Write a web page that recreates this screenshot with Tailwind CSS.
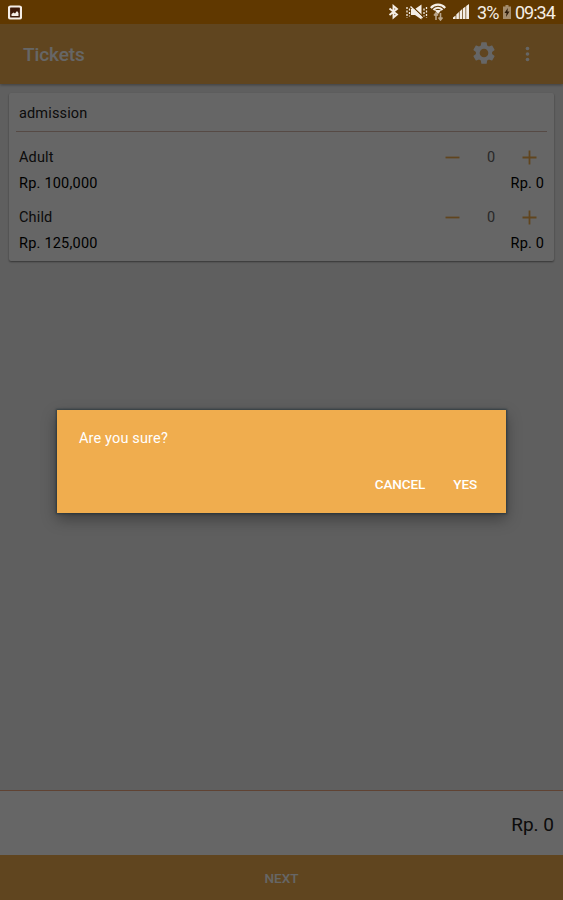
<!DOCTYPE html>
<html lang="en">

<head>
  <meta charset="UTF-8">
  <meta name="viewport" content="width=device-width, initial-scale=1.0">
  <title>Tickets</title>
  <script src="https://cdn.jsdelivr.net/npm/@tailwindcss/browser@4"></script>
</head>

<body class="bg-[#eeeeee] font-['Roboto',sans-serif]">
  <div class="relative h-[900px] w-[563px] flex flex-col overflow-hidden">
    <!-- Status bar -->
    <div class="relative z-20 h-6 shrink-0 bg-[#603800] text-[#f5eee6] flex items-center pl-2 pr-[7px]">
      <svg class="w-[14px] h-[15px]" viewBox="0 0 14 15">
        <rect x="1" y="1.5" width="12" height="12" rx="1.5" fill="#3d1a08" stroke="currentColor" stroke-width="2.200" />
        <path d="M3.500 11V9l2-1.500 1.500 1 2-2.500 1.500 2V11z" fill="currentColor" />
      </svg>
      <div class="ml-auto flex items-center">
        <svg class="w-[11px] h-[16px]" viewBox="0 0 11 16" fill="none" stroke="currentColor" stroke-width="1.900">
          <path d="M1.500 4.500 9 10.500 5.500 13.500V2L9 5 1.500 11" />
        </svg>
        <svg class="ml-[7px] w-[22px] h-[16px]" viewBox="0 0 22 16">
          <path d="M5 5h4l6.500-4.500v15L9 11H5z" fill="currentColor" />
          <path d="M5.500 1.800l11 10.500" stroke="#603800" stroke-width="1.200" />
          <path d="M4.500 2.500l12 11.500" stroke="currentColor" stroke-width="1.400" />
          <path d="M1 3v11M3.500 4.500v8M18 4.500v8M20.500 3v11" stroke="currentColor" stroke-width="1.300" stroke-dasharray="2 1.500" />
        </svg>
        <svg class="ml-[2px] w-[16px] h-[18px]" viewBox="0 0 16 18" fill="none" stroke="currentColor">
          <path d="M.8 5C4.500.5 11.500.5 15.200 5M3.500 7c2.500-3 6.500-3 9 0" stroke-width="2.200" />
          <path d="M5.500 7.500h5L8 10.500z" fill="currentColor" />
          <path d="M6 17v-7M4 12.500l2-2.500 2 2.500M10.500 10v7M8.500 14.500l2 2.500 2-2.500" stroke="#b9a58b" stroke-width="1.600" />
        </svg>
        <svg class="ml-[7px] w-[17px] h-[16px]" viewBox="0 0 17 16" fill="currentColor">
          <path d="M0 15v-1.500L2.600 11.500V15zM3.300 15v-4.500L5.900 8v7zM6.600 15V7.500L9.200 5v10zM9.900 15V4.500L12.500 2.500V15zM13.200 15V2L16 0v15z" />
        </svg>
        <span class="ml-[7px] text-[18px] leading-6 w-[22px] tracking-[-0.9px] pt-px">3%</span>
        <svg class="ml-[4px] w-[8px] h-[14px]" viewBox="0 0 8 14">
          <path d="M2.500 0h3v1.500H8V14H0V1.500h2.500z" fill="#a38b6b" />
          <path d="M4.800 3 1.500 8h2L3 12l3.500-5.500h-2z" fill="#2c1a08" />
        </svg>
        <span class="ml-[4px] text-[18px] leading-6 w-[41px] tracking-[-1px] pt-px">09:34</span>
      </div>
    </div>

    <!-- App bar -->
    <header class="relative h-[60px] shrink-0 bg-[#f0ad4e] text-white flex items-center pl-[23px] pr-[27px] shadow-[0_1px_3px_rgba(0,0,0,0.35)]">
      <h1 class="pt-[2px] text-[19px] font-medium tracking-[-0.1px]">Tickets</h1>
      <svg class="ml-auto mb-[2px] w-[26px] h-[26px]" viewBox="0 0 24 24">
        <path d="M19.430 12.980c.040-.320.070-.640.070-.980s-.030-.660-.070-.980l2.110-1.650c.190-.150.240-.420.120-.640l-2-3.460c-.120-.220-.390-.300-.610-.220l-2.490 1c-.520-.400-1.080-.730-1.690-.980l-.380-2.650A.488.488 0 0 0 14 2h-4c-.250 0-.460.180-.490.420l-.380 2.650c-.610.250-1.170.590-1.690.980l-2.490-1c-.230-.090-.490 0-.610.220l-2 3.460c-.130.220-.070.490.120.640l2.110 1.650c-.040.320-.070.650-.070.980s.030.660.070.980l-2.110 1.650c-.190.150-.240.420-.120.640l2 3.460c.120.220.390.300.610.220l2.490-1c.520.400 1.080.730 1.690.980l.380 2.650c.030.240.240.420.490.420h4c.250 0 .460-.180.490-.420l.380-2.650c.610-.250 1.170-.590 1.690-.980l2.490 1c.230.090.490 0 .610-.220l2-3.460c.120-.220.070-.490-.120-.640z" fill="currentColor" />
        <circle cx="12" cy="12" r="4" fill="#f0ad4e" />
      </svg>
      <svg class="ml-[22px] w-[17px] h-[18px]" viewBox="0 0 17 18" fill="currentColor">
        <circle cx="8.500" cy="3.500" r="1.800" />
        <circle cx="8.500" cy="9" r="1.800" />
        <circle cx="8.500" cy="14.500" r="1.800" />
      </svg>
    </header>

    <!-- Ticket list -->
    <main class="flex-1 px-[9px] pt-[9px]">
      <section class="h-[168px] bg-white rounded-[2px] px-[7px] text-[14.500px] leading-[26px] tracking-[0.150px] text-[#212121] shadow-[0_1px_2px_rgba(0,0,0,0.45)]">
        <h2 class="h-[39px] pt-[8px] px-[3px] border-b border-[#d8b8ac]">admission</h2>
        <div class="pt-3 px-[3px]">
          <div class="flex justify-between">
            <span class="pt-px -mb-px">Adult</span>
            <div class="flex items-center gap-[27px] pr-[7px] text-[#666666]">
              <svg class="w-[15px] h-[15px] mb-px" viewBox="0 0 15 15"><path d="M.5 7.500h14" stroke="#f0ad4e" stroke-width="1.800" /></svg>
              <span class="w-[8px] pt-px">0</span>
              <svg class="w-[15px] h-[15px] mb-px" viewBox="0 0 15 15"><path d="M.5 7.500h14M7.500.5v14" stroke="#f0ad4e" stroke-width="1.800" /></svg>
            </div>
          </div>
          <div class="flex justify-between text-black -mt-px pt-px">
            <span class="tracking-[0.220px]">Rp. 100,000</span>
            <span>Rp. 0</span>
          </div>
        </div>
        <div class="pt-[7px] px-[3px]">
          <div class="flex justify-between">
            <span class="pt-px -mb-px">Child</span>
            <div class="flex items-center gap-[27px] pr-[7px] text-[#666666]">
              <svg class="w-[15px] h-[15px] mb-px" viewBox="0 0 15 15"><path d="M.5 7.500h14" stroke="#f0ad4e" stroke-width="1.800" /></svg>
              <span class="w-[8px] pt-px">0</span>
              <svg class="w-[15px] h-[15px] mb-px" viewBox="0 0 15 15"><path d="M.5 7.500h14M7.500.5v14" stroke="#f0ad4e" stroke-width="1.800" /></svg>
            </div>
          </div>
          <div class="flex justify-between text-black -mt-px pt-px">
            <span class="tracking-[0.220px]">Rp. 125,000</span>
            <span>Rp. 0</span>
          </div>
        </div>
      </section>
    </main>

    <!-- Total -->
    <div class="h-[65px] shrink-0 bg-white border-t border-[#f0a880] flex items-center justify-end px-[9px] pt-1">
      <span class="text-[19px] text-[#212121]">Rp. 0</span>
    </div>
    <button class="h-[45px] shrink-0 bg-[#f0ad4e] text-white text-[13.500px] font-medium pt-px">NEXT</button>

    <!-- Confirm dialog -->
    <div class="absolute inset-0 z-10 bg-black/60 pt-[410px]">
      <div class="w-[449px] h-[103px] ml-[57px] bg-[#f0ad4e] text-white flex flex-col justify-between pt-[19px] pb-[19px] pl-[22px] pr-[29px] shadow-[0_0_2px_1px_rgba(20,40,50,0.6),0_6px_14px_rgba(0,0,0,0.35)]">
        <p class="text-[14.500px] leading-5 tracking-[0.150px]">Are you sure?</p>
        <div class="flex justify-end gap-7 text-[13.500px] leading-5 font-medium tracking-[-0.100px]">
          <button>CANCEL</button>
          <button>YES</button>
        </div>
      </div>
    </div>
  </div>
</body>

</html>
